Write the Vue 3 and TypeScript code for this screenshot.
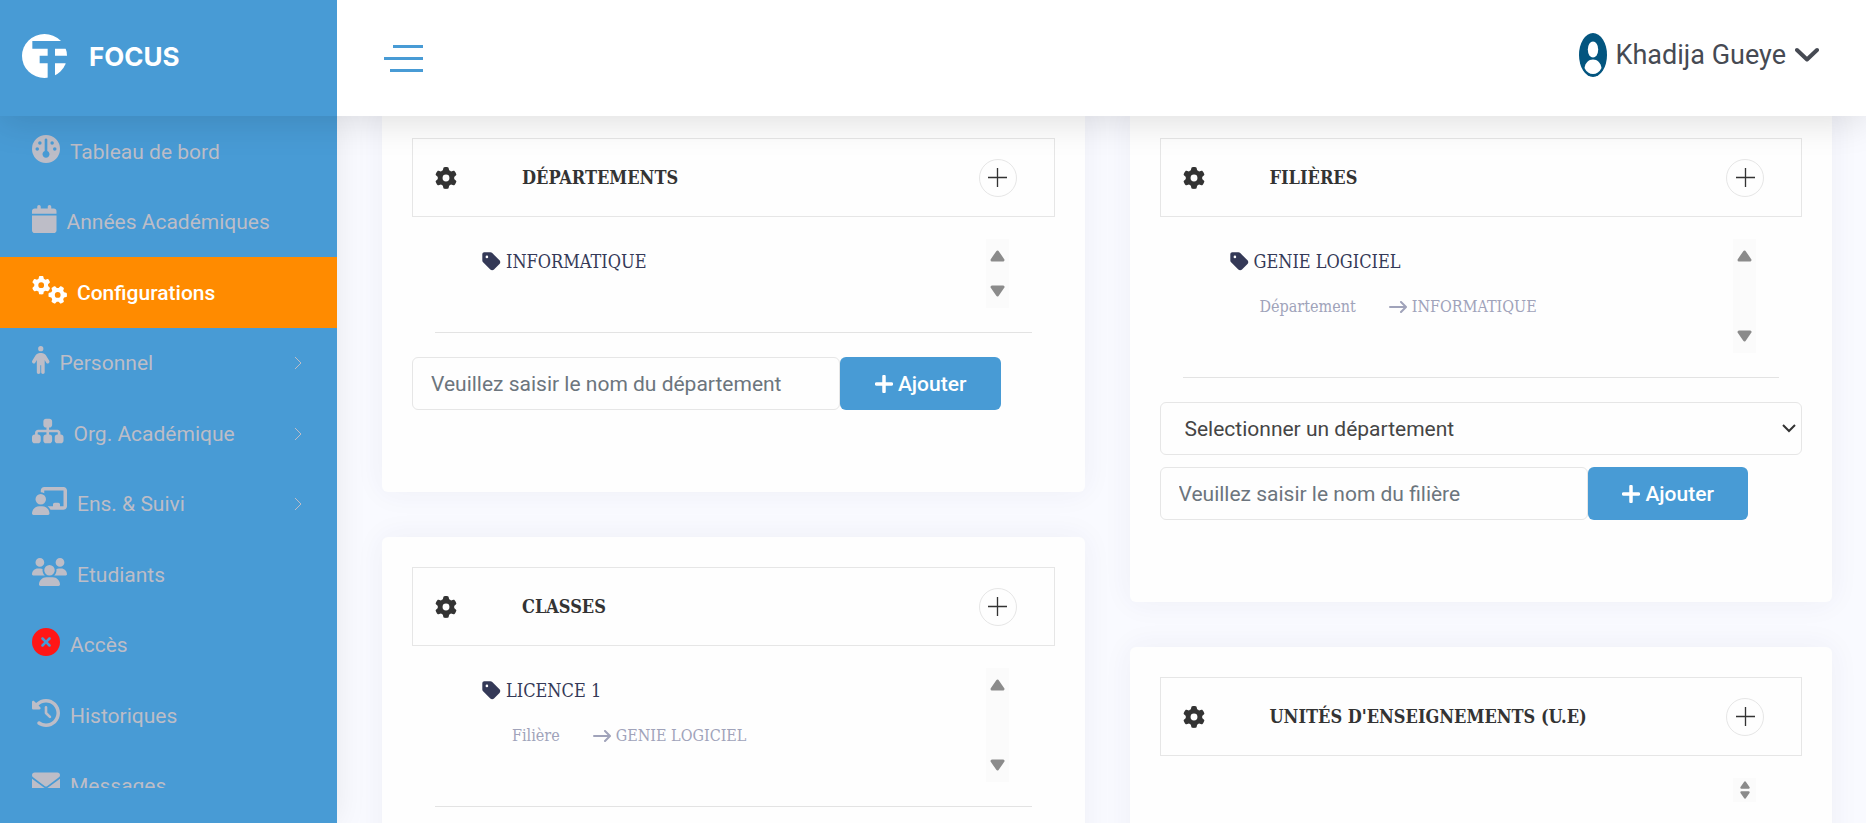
<script setup lang="ts">
import { ref } from 'vue'

interface NavItem {
  label: string
  icon: string
  width: number
  active?: boolean
  danger?: boolean
  expandable?: boolean
}

interface Entry {
  name: string
  parentLabel?: string
  parent?: string
}

interface Panel {
  id: string
  title: string
  entries: Entry[]
  select?: string
  placeholder: string
}

const gear =
  'M495.9 166.6c3.2 8.7 .5 18.4-6.4 24.6l-43.3 39.4c1.1 8.3 1.7 16.8 1.7 25.4s-.6 17.1-1.7 25.4l43.3 39.4c6.9 6.2 9.6 15.9 6.4 24.6c-4.4 11.9-9.7 23.3-15.8 34.3l-4.7 8.1c-6.6 11-14 21.4-22.1 31.2c-5.9 7.2-15.7 9.6-24.5 6.8l-55.7-17.7c-13.4 10.3-28.2 18.9-44 25.4l-12.5 57.1c-2 9.1-9 16.3-18.2 17.8c-13.8 2.3-28 3.5-42.5 3.5s-28.7-1.2-42.5-3.5c-9.2-1.5-16.2-8.7-18.2-17.8l-12.5-57.1c-15.8-6.5-30.6-15.1-44-25.4L83.1 425.9c-8.8 2.8-18.6 .3-24.5-6.8c-8.1-9.8-15.5-20.2-22.1-31.2l-4.7-8.1c-6.1-11-11.4-22.4-15.8-34.3c-3.2-8.7-.5-18.4 6.4-24.6l43.3-39.4C64.6 273.1 64 264.6 64 256s.6-17.1 1.7-25.4L22.4 191.2c-6.9-6.2-9.6-15.9-6.4-24.6c4.4-11.9 9.7-23.3 15.8-34.3l4.7-8.1c6.6-11 14-21.4 22.1-31.2c5.9-7.2 15.7-9.6 24.5-6.8l55.7 17.7c13.4-10.3 28.2-18.9 44-25.4l12.5-57.1c2-9.1 9-16.3 18.2-17.8C227.3 1.2 241.5 0 256 0s28.7 1.2 42.5 3.5c9.2 1.5 16.2 8.7 18.2 17.8l12.5 57.1c15.8 6.5 30.6 15.1 44 25.4l55.7-17.7c8.8-2.8 18.6-.3 24.5 6.8c8.1 9.8 15.5 20.2 22.1 31.2l4.7 8.1c6.1 11 11.4 22.4 15.8 34.3zM256 336a80 80 0 1 0 0-160 80 80 0 1 0 0 160z'

const icons: Record<string, string> = {
  gauge:
    'M0 256a256 256 0 1 1 512 0A256 256 0 1 1 0 256zm320 96c0-26.9-16.5-49.9-40-59.3V88c0-13.3-10.7-24-24-24s-24 10.7-24 24V292.7c-23.5 9.5-40 32.5-40 59.3c0 35.3 28.7 64 64 64s64-28.7 64-64zM144 176a32 32 0 1 0 0-64 32 32 0 1 0 0 64zm-16 80a32 32 0 1 0 -64 0 32 32 0 1 0 64 0zm288 32a32 32 0 1 0 0-64 32 32 0 1 0 0 64zM400 144a32 32 0 1 0 -64 0 32 32 0 1 0 64 0z',
  calendar:
    'M96 32V64H48C21.5 64 0 85.5 0 112v48H448V112c0-26.5-21.5-48-48-48H352V32c0-17.7-14.3-32-32-32s-32 14.3-32 32V64H160V32c0-17.7-14.3-32-32-32S96 14.3 96 32zM448 192H0V464c0 26.5 21.5 48 48 48H400c26.5 0 48-21.5 48-48V192z',
  person:
    'M112 48a48 48 0 1 1 96 0 48 48 0 1 1 -96 0zm40 304V480c0 17.7-14.3 32-32 32s-32-14.3-32-32V256.9L59.4 304.5c-9.1 15.1-28.8 20-43.9 10.9s-20-28.8-10.9-43.9l58.3-97c17.4-28.9 48.6-46.6 82.3-46.6h29.7c33.7 0 64.9 17.7 82.3 46.6l58.3 97c9.1 15.1 4.2 34.8-10.9 43.9s-34.8 4.2-43.9-10.9L232 256.9V480c0 17.7-14.3 32-32 32s-32-14.3-32-32V352H152z',
  sitemap:
    'M208 80c0-26.5 21.5-48 48-48h64c26.5 0 48 21.5 48 48v64c0 26.5-21.5 48-48 48h-8v40H464c30.9 0 56 25.1 56 56v32h8c26.5 0 48 21.5 48 48v64c0 26.5-21.5 48-48 48H464c-26.5 0-48-21.5-48-48V368c0-26.5 21.5-48 48-48h8V288c0-4.4-3.6-8-8-8H312v40h8c26.5 0 48 21.5 48 48v64c0 26.5-21.5 48-48 48H256c-26.5 0-48-21.5-48-48V368c0-26.5 21.5-48 48-48h8V280H112c-4.4 0-8 3.6-8 8v32h8c26.5 0 48 21.5 48 48v64c0 26.5-21.5 48-48 48H48c-26.5 0-48-21.5-48-48V368c0-26.5 21.5-48 48-48h8V288c0-30.9 25.1-56 56-56H264V192h-8c-26.5 0-48-21.5-48-48V80z',
  board:
    'M160 64c0-35.3 28.7-64 64-64H576c35.3 0 64 28.7 64 64V352c0 35.3-28.7 64-64 64H336.8c-11.8-25.5-29.9-47.5-52.4-64H384V320c0-17.7 14.3-32 32-32h64c17.7 0 32 14.3 32 32v32h64V64L224 64v49.1C205.2 102.2 183.3 96 160 96V64zm0 64a96 96 0 1 1 0 192 96 96 0 1 1 0-192zM133.3 352h53.3C260.3 352 320 411.7 320 485.3c0 14.7-11.9 26.7-26.7 26.7H26.7C11.9 512 0 500.1 0 485.3C0 411.7 59.7 352 133.3 352z',
  users:
    'M144 0a80 80 0 1 1 0 160A80 80 0 1 1 144 0zM512 0a80 80 0 1 1 0 160A80 80 0 1 1 512 0zM0 298.7C0 239.8 47.8 192 106.7 192h42.7c15.9 0 31 3.5 44.6 9.7c-1.3 7.2-1.9 14.7-1.9 22.3c0 38.2 16.8 72.5 43.3 96c-.2 0-.4 0-.7 0H21.3C9.6 320 0 310.4 0 298.7zM405.3 320c-.2 0-.4 0-.7 0c26.6-23.5 43.3-57.8 43.3-96c0-7.6-.7-15-1.9-22.3c13.6-6.3 28.7-9.7 44.6-9.7h42.7C592.2 192 640 239.8 640 298.7c0 11.8-9.6 21.3-21.3 21.3H405.3zM224 224a96 96 0 1 1 192 0 96 96 0 1 1 -192 0zM128 485.3C128 411.7 187.7 352 261.3 352H378.7C452.3 352 512 411.7 512 485.3c0 14.7-11.9 26.7-26.7 26.7H154.7c-14.7 0-26.7-11.9-26.7-26.7z',
  cross:
    'M256 512A256 256 0 1 0 256 0a256 256 0 1 0 0 512zM175 175c9.4-9.4 24.6-9.4 33.9 0l47 47 47-47c9.4-9.4 24.6-9.4 33.9 0s9.4 24.6 0 33.9l-47 47 47 47c9.4 9.4 9.4 24.6 0 33.9s-24.6 9.4-33.9 0l-47-47-47 47c-9.4 9.4-24.6 9.4-33.9 0s-9.4-24.6 0-33.9l47-47-47-47c-9.4-9.4-9.4-24.6 0-33.9z',
  history:
    'M75 75L41 41C25.9 25.9 0 36.6 0 57.9V168c0 13.3 10.7 24 24 24H134.1c21.4 0 32.1-25.9 17-41l-30.8-30.8C155 85.5 203 64 256 64c106 0 192 86 192 192s-86 192-192 192c-40.8 0-78.6-12.7-109.7-34.4c-14.5-10.1-34.4-6.6-44.6 7.9s-6.6 34.4 7.9 44.6C151.2 495 201.7 512 256 512c141.4 0 256-114.6 256-256S397.4 0 256 0C185.3 0 121.3 28.7 75 75zm181 53c-13.3 0-24 10.7-24 24V256c0 6.4 2.5 12.5 7 17l72 72c9.4 9.4 24.6 9.4 33.9 0s9.4-24.6 0-33.9l-65-65V152c0-13.3-10.7-24-24-24z',
  envelope:
    'M48 64C21.5 64 0 85.5 0 112c0 15.1 7.1 29.3 19.2 38.4L236.8 313.6c11.4 8.5 27 8.5 38.4 0L492.8 150.4c12.1-9.1 19.2-23.3 19.2-38.4c0-26.5-21.5-48-48-48H48zM0 176V384c0 35.3 28.7 64 64 64H448c35.3 0 64-28.7 64-64V176L294.4 339.2c-22.8 17.1-54 17.1-76.8 0L0 176z'
}

const nav: NavItem[] = [
  { label: 'Tableau de bord', icon: 'gauge', width: 512 },
  { label: 'Années Académiques', icon: 'calendar', width: 448 },
  { label: 'Configurations', icon: 'gears', width: 640, active: true },
  { label: 'Personnel', icon: 'person', width: 320, expandable: true },
  { label: 'Org. Académique', icon: 'sitemap', width: 576, expandable: true },
  { label: 'Ens. & Suivi', icon: 'board', width: 640, expandable: true },
  { label: 'Etudiants', icon: 'users', width: 640 },
  { label: 'Accès', icon: 'cross', width: 512, danger: true },
  { label: 'Historiques', icon: 'history', width: 512 },
  { label: 'Messages', icon: 'envelope', width: 512 }
]

const columns: Panel[][] = [
  [
    {
      id: 'departement',
      title: 'DÉPARTEMENTS',
      entries: [{ name: 'INFORMATIQUE' }],
      placeholder: 'Veuillez saisir le nom du département'
    },
    {
      id: 'classe',
      title: 'CLASSES',
      entries: [{ name: 'LICENCE 1', parentLabel: 'Filière', parent: 'GENIE LOGICIEL' }],
      select: 'Selectionner une filière',
      placeholder: 'Veuillez saisir le nom de la classe'
    }
  ],
  [
    {
      id: 'filiere',
      title: 'FILIÈRES',
      entries: [{ name: 'GENIE LOGICIEL', parentLabel: 'Département', parent: 'INFORMATIQUE' }],
      select: 'Selectionner un département',
      placeholder: 'Veuillez saisir le nom du filière'
    },
    {
      id: 'ue',
      title: "UNITÉS D'ENSEIGNEMENTS (U.E)",
      entries: [],
      placeholder: "Veuillez saisir le nom de l'unité"
    }
  ]
]

const names = ref<Record<string, string>>({})
</script>

<template>
  <div class="app">
    <header class="topbar">
      <a class="brand" href="#">
        <svg class="logo" viewBox="66 102 135 132" aria-hidden="true">
          <ellipse cx="133.5" cy="168" rx="67.5" ry="66" fill="#fff" />
          <path d="M97 123H201V146H165V167H201V190H165V234H143V190H119V167H143V146H97Z" fill="#489bd5" />
        </svg>
        <span>FOCUS</span>
      </a>
      <div class="bar">
        <button class="burger" type="button" aria-label="Menu">
          <span class="line short"></span>
          <span class="line"></span>
          <span class="line medium"></span>
        </button>
        <button class="user" type="button">
          <svg class="avatar" viewBox="0 0 28 44" aria-hidden="true">
            <ellipse cx="14" cy="22" rx="14" ry="22" fill="#03557f" />
            <ellipse cx="14" cy="16.500" rx="5.200" ry="8" fill="#fff" />
            <path d="M5.500 35C6.500 29.500 9.500 26.500 14 26.500S21.500 29.500 22.500 35C20.500 39 17.500 41 14 41S7.500 39 5.500 35Z" fill="#fff" />
          </svg>
          <span>Khadija Gueye</span>
          <svg class="caret" viewBox="0 0 24 16" aria-hidden="true"><path d="M2 3 12 12.500 22 3" /></svg>
        </button>
      </div>
    </header>

    <aside class="sidebar">
      <nav class="nav">
        <a v-for="item in nav" :key="item.label" class="nav-link" :class="{ active: item.active }" href="#">
          <span class="nav-label">
            <svg class="nav-icon" :class="{ danger: item.danger }" :viewBox="`0 0 ${item.width} 512`" aria-hidden="true">
              <template v-if="item.icon === 'gears'">
                <path :d="gear" transform="translate(168 168) scale(.66) translate(-256 -256)" />
                <path :d="gear" transform="translate(470 346) rotate(90) scale(.66) translate(-256 -256)" />
              </template>
              <path v-else :d="icons[item.icon]" />
            </svg>{{ item.label }}
          </span>
          <svg v-if="item.expandable" class="nav-arrow" viewBox="0 0 8 14" aria-hidden="true"><path d="M1 1 7 7 1 13" /></svg>
        </a>
      </nav>
    </aside>

    <main class="content">
      <div class="columns">
        <div v-for="(column, index) in columns" :key="index" class="column">
          <section v-for="panel in column" :key="panel.id" class="card">
            <div class="card-head">
              <svg class="gear" viewBox="0 0 512 512" aria-hidden="true"><path :d="gear" /></svg>
              <h2>{{ panel.title }}</h2>
              <button class="round" type="button" :aria-label="`Ouvrir ${panel.title}`">
                <svg viewBox="0 0 20 20" aria-hidden="true"><path d="M10 0V20M0 10H20" /></svg>
              </button>
            </div>

            <div class="list">
              <ul>
                <li v-for="entry in panel.entries" :key="entry.name">
                  <div class="entry">
                    <svg class="tag" viewBox="0 0 448 512" aria-hidden="true">
                      <path d="M0 80V229.500c0 17 6.700 33.300 18.700 45.300l176 176c25 25 65.500 25 90.500 0L418.700 317.300c25-25 25-65.500 0-90.500l-176-176c-12-12-28.300-18.700-45.300-18.700H48C21.500 32 0 53.500 0 80zm112 32a32 32 0 1 1 0 64 32 32 0 1 1 0-64z" />
                    </svg>
                    <span>{{ entry.name }}</span>
                  </div>
                  <div v-if="entry.parent" class="sub">
                    <span class="sub-label">{{ entry.parentLabel }}</span>
                    <svg class="arrow" viewBox="0 0 18 12" aria-hidden="true"><path d="M1 6H16.500M12 1 17 6 12 11" /></svg>
                    <span>{{ entry.parent }}</span>
                  </div>
                </li>
              </ul>
              <div class="scroller" :class="{ small: !panel.entries.length }" aria-hidden="true">
                <svg viewBox="0 0 15 12"><path d="M7.500 2 13 10H2Z" /></svg>
                <svg viewBox="0 0 15 12"><path d="M7.500 10 13 2H2Z" /></svg>
              </div>
            </div>

            <hr />

            <form class="form" @submit.prevent>
              <select v-if="panel.select" :id="`${panel.id}-parent`" :aria-label="panel.select">
                <option>{{ panel.select }}</option>
              </select>
              <input :id="`${panel.id}-nom`" v-model="names[panel.id]" type="text" :placeholder="panel.placeholder" :aria-label="panel.placeholder" />
              <button class="add" type="submit">
                <svg viewBox="0 0 18 18" aria-hidden="true"><path d="M9 1.500V16.500M1.500 9H16.500" /></svg>
                <span>Ajouter</span>
              </button>
            </form>
          </section>
        </div>
      </div>
    </main>
  </div>
</template>

<style>
body {
  margin: 0;
  background: #f9faff;
}
</style>

<style scoped>
.app {
  display: grid;
  grid-template-columns: 337px 1fr;
  grid-template-rows: 116px 1fr;
  height: 100vh;
  overflow: hidden;
  background: #f9faff;
  font-family: Roboto, "Liberation Sans", sans-serif;
}

.app *,
.app *::before {
  box-sizing: border-box;
}

button,
input,
select {
  font: inherit;
}

svg path {
  fill-rule: evenodd;
}

a {
  text-decoration: none;
}

.topbar {
  grid-column: 1 / -1;
  position: relative;
  z-index: 2;
  display: grid;
  grid-template-columns: 337px 1fr;
  background: #fff;
  box-shadow: 0 5px 35px rgba(0, 0, 0, 0.13);
}

.brand {
  display: flex;
  align-items: center;
  gap: 22px;
  padding: 0 22px 4px;
  background: #489bd5;
  color: #fff;
  font-family: Inter, sans-serif;
  font-size: 26px;
  font-weight: 700;
}

.logo {
  width: 45px;
  height: 44px;
}

.bar {
  display: flex;
  align-items: center;
  justify-content: space-between;
  padding: 0 47px 0 46px;
}

.burger {
  display: flex;
  flex-direction: column;
  align-items: flex-end;
  gap: 9px;
  width: 40px;
  padding: 0;
  border: 0;
  background: none;
}

.line {
  width: 39px;
  height: 3px;
  background: #489bd5;
}

.line.short {
  width: 30px;
}

.line.medium {
  width: 33px;
}

.user {
  display: flex;
  align-items: center;
  gap: 9px;
  padding: 0 0 6px;
  border: 0;
  background: none;
  color: #464a53;
  font-size: 27px;
}

.avatar {
  width: 28px;
  height: 44px;
}

.caret {
  width: 24px;
  height: 16px;
  fill: none;
  stroke: #464a53;
  stroke-width: 4;
  stroke-linecap: round;
  stroke-linejoin: round;
}

.sidebar {
  position: relative;
  z-index: 1;
  min-height: 0;
  padding-bottom: 35px;
  background: #489bd5;
  box-shadow: 0 0 30px rgba(0, 0, 0, 0.08);
}

.nav {
  display: grid;
  grid-auto-rows: 71px 70px;
  height: 100%;
  overflow: hidden;
}

.nav-link {
  display: flex;
  align-items: center;
  justify-content: space-between;
  padding: 0 35px 0 32px;
  color: #bdbdc7;
  font-size: 21px;
  line-height: 70px;
}

.nav-link.active {
  background: #ff8b00;
  color: #fff;
  font-weight: 500;
}

.nav-icon {
  height: 28px;
  margin-right: 10px;
  vertical-align: -4px;
  fill: currentColor;
}

.nav-icon.danger {
  fill: #ff1616;
}

.nav-arrow {
  width: 8px;
  height: 14px;
  fill: none;
  stroke: #bdbdc7;
  stroke-width: 1;
}

.content {
  min-width: 0;
  min-height: 0;
  overflow: hidden;
  padding: 0 34px 0 45px;
}

.columns {
  display: grid;
  grid-template-columns: 1fr 1fr;
  gap: 45px;
  margin-top: -8px;
}

.column {
  display: flex;
  flex-direction: column;
  gap: 45px;
}

.card {
  padding: 30px 30px 82px;
  border-radius: 6px;
  background: #fefefe;
  box-shadow: 0 0 30px rgba(46, 54, 110, 0.06);
}

.card-head {
  display: flex;
  align-items: center;
  height: 79px;
  padding: 0 37px 0 22px;
  border: 1px solid #e6e6e6;
}

.gear {
  width: 22px;
  height: 22px;
  fill: #333;
}

h2 {
  flex: 1;
  margin: 0 0 0 65px;
  color: #333;
  font-family: "DejaVu Serif Condensed", "DejaVu Serif", serif;
  font-size: 18px;
  font-weight: 700;
}

.round {
  display: flex;
  align-items: center;
  justify-content: center;
  width: 38px;
  height: 38px;
  padding: 0;
  border: 1px solid #e6e6e6;
  border-radius: 50%;
  background: none;
}

.round svg {
  width: 19px;
  height: 19px;
  stroke: #333;
  stroke-width: 1.4;
}

.list {
  display: flex;
  align-items: stretch;
  justify-content: space-between;
  padding: 22px 46px 24px 70px;
  font-family: "DejaVu Serif Condensed", "DejaVu Serif", serif;
}

ul {
  margin: 0;
  padding: 0 0 24px;
  list-style: none;
}

.entry,
.sub {
  display: flex;
  align-items: center;
  height: 45px;
}

.entry {
  gap: 5px;
  color: #343957;
  font-size: 18px;
}

.tag {
  width: 19px;
  height: 21px;
  fill: #343957;
}

.sub {
  gap: 5px;
  padding-left: 30px;
  color: #a0a3ba;
  font-size: 16px;
}

.sub-label {
  margin-right: 28px;
}

.arrow {
  width: 18px;
  height: 12px;
  fill: none;
  stroke: #a0a3ba;
  stroke-width: 2;
  stroke-linecap: round;
  stroke-linejoin: round;
}

.scroller {
  display: flex;
  flex-direction: column;
  align-items: center;
  justify-content: space-between;
  width: 23px;
  padding: 11px 0;
  background: #fbfbfb;
}

.scroller svg {
  width: 15px;
  height: 12px;
  fill: #8b8b8b;
  stroke: #8b8b8b;
  stroke-width: 3;
  stroke-linejoin: round;
}

.scroller.small {
  padding: 3px 0;
}

.scroller.small svg {
  width: 10px;
  height: 8px;
}

hr {
  width: auto;
  height: 1px;
  margin: 0 23px;
  border: 0;
  background: #e3e3e3;
}

.form {
  display: grid;
  grid-template-columns: 8fr 3fr 1fr;
  row-gap: 12px;
  padding-top: 24px;
  font-size: 21px;
}

.form select,
.form input {
  min-width: 0;
  height: 53px;
  border: 1px solid #e6e6e6;
  border-radius: 6px;
  background-color: transparent;
  color: #454545;
  outline: 0;
}

.form select {
  grid-column: 1 / -1;
  padding: 0 24px;
  appearance: none;
  background-image: url("data:image/svg+xml,%3Csvg xmlns='http://www.w3.org/2000/svg' viewBox='0 0 14 9'%3E%3Cpath d='M1 1l6 6 6-6' fill='none' stroke='%23333' stroke-width='2'/%3E%3C/svg%3E");
  background-position: right 5px center;
  background-repeat: no-repeat;
  background-size: 14px 9px;
}

.form input {
  padding: 0 18px;
}

.form input::placeholder {
  color: #6c757d;
  opacity: 1;
}

.add {
  display: flex;
  align-items: center;
  justify-content: center;
  gap: 5px;
  padding: 0;
  border: 0;
  border-radius: 6px;
  background: #489bd5;
  color: #fff;
  font-weight: 500;
}

.add svg {
  width: 18px;
  height: 18px;
  stroke: #fff;
  stroke-width: 3.5;
  stroke-linecap: round;
}
</style>
